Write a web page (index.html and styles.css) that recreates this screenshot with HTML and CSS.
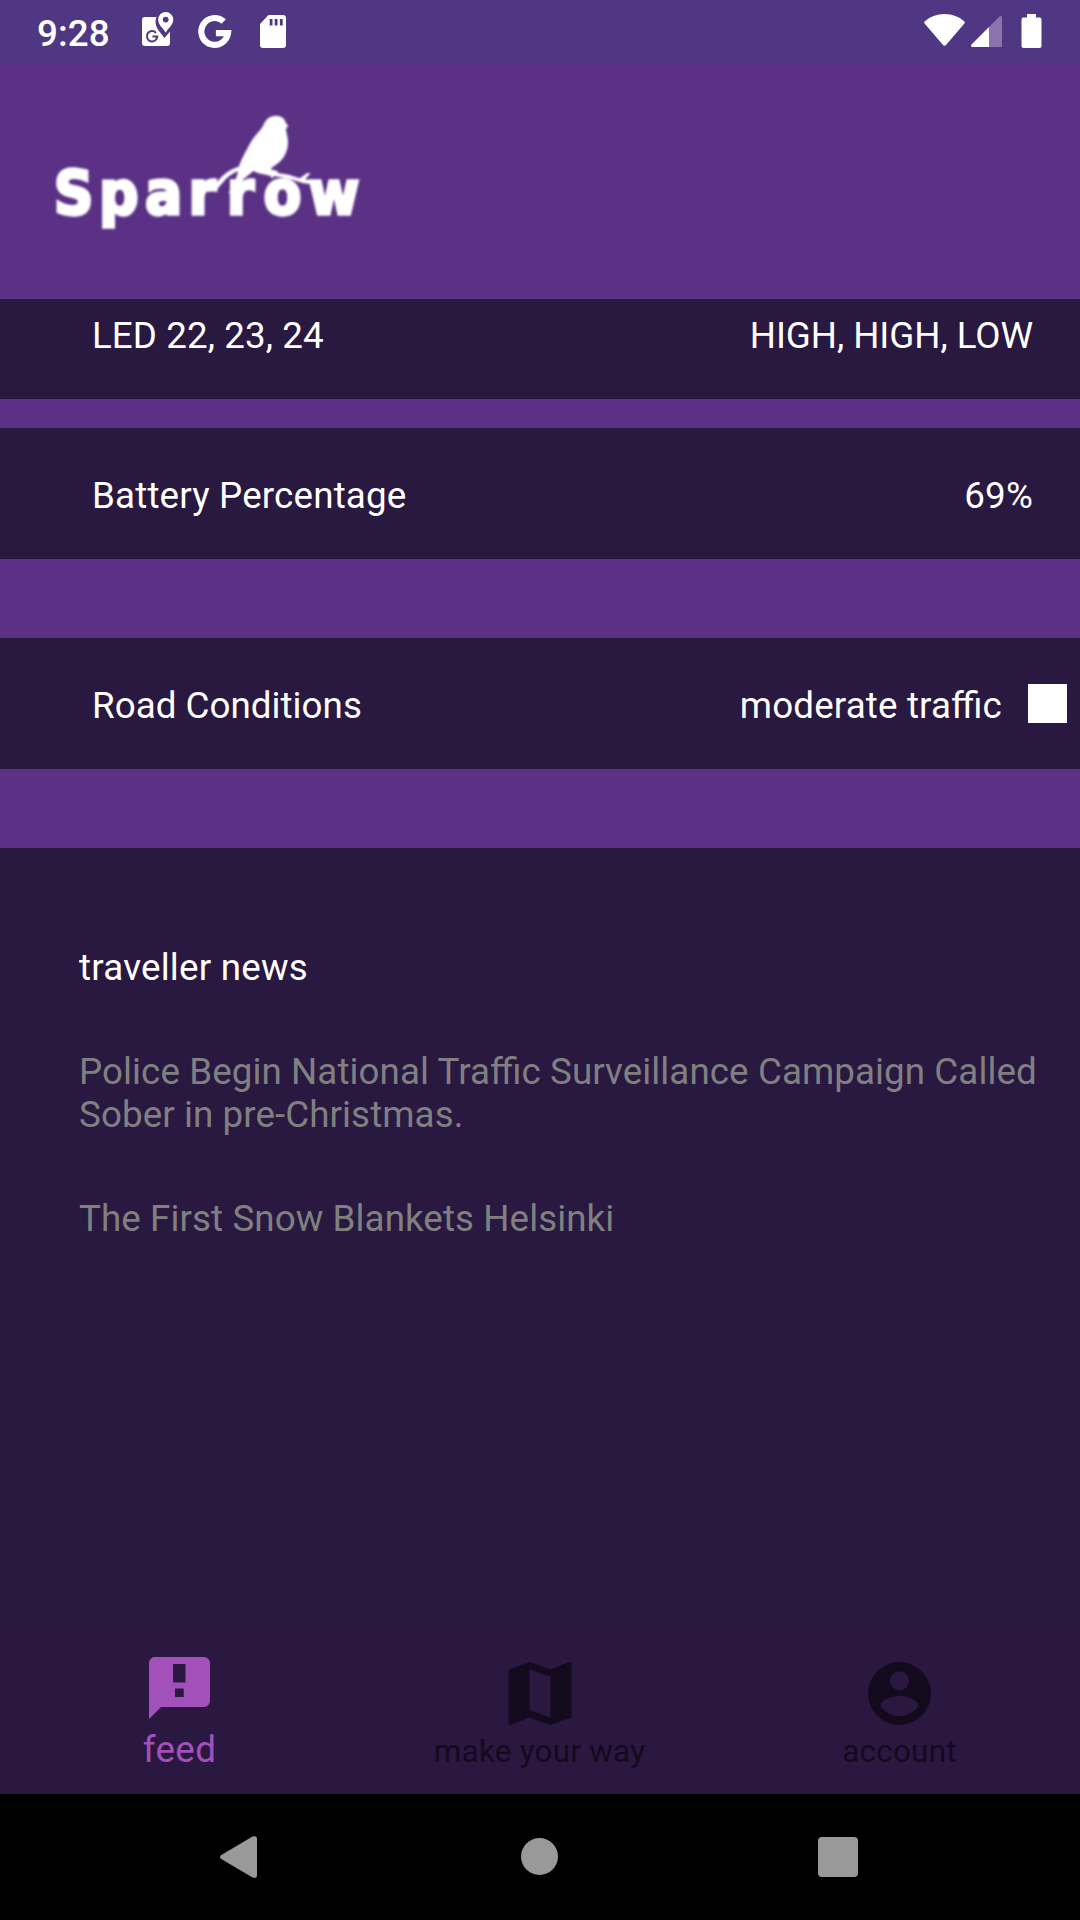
FILE: index.html
```html
<!DOCTYPE html>
<html lang="en">
<head>
<meta charset="utf-8">
<title>Sparrow</title>
<link rel="stylesheet" href="styles.css">
</head>
<body>
<div class="screen">
  <header class="status-bar">
    <span class="clock">9:28</span>
    <svg class="status-left" width="150" height="63" viewBox="0 0 150 63" fill="#fff">
      <path d="M5 17h11.500c-2 5-.5 10 2.500 14l5.500 7 5.500-6.500V43a3 3 0 0 1-3 3H5a3 3 0 0 1-3-3V20a3 3 0 0 1 3-3z"/>
      <path fill-rule="evenodd" d="M25.700 12a7.600 7.600 0 0 1 7.600 7.600c0 5.500-5 8.500-7.600 13-2.600-4.500-7.600-7.500-7.600-13a7.600 7.600 0 0 1 7.600-7.600zm0 4.700a2.900 2.900 0 1 0 0 5.800 2.900 2.900 0 0 0 0-5.800z"/>
      <path d="M16 32.800A5.200 5.200 0 1 0 17.300 36.500H12.500" fill="none" stroke="#503783" stroke-width="2"/>
      <path d="M83.700 21.500A13.400 13.400 0 1 0 88 33.200H75.900" fill="none" stroke="#fff" stroke-width="6.200"/>
      <path fill-rule="evenodd" d="M128.500 15H143a3 3 0 0 1 3 3v27a3 3 0 0 1-3 3h-20a3 3 0 0 1-3-3V24zm1.200 4v6.500h2.800V19zm5 0v6.500h2.800V19zm5.200 0v6.500h2.800V19z"/>
    </svg>
    <svg class="status-right" width="120" height="63" viewBox="0 0 120 63" fill="#fff">
      <path d="M4.500 21.500Q12.500 14 24.500 14t20 7.500q.8 1-.3 2.300L26 45q-1.500 1.600-3 0L4.800 23.800q-1-1.300-.3-2.300z"/>
      <path fill="#8b74ad" d="M69 27 79.500 16.500q2.500-1.500 2.500 1.500V47H69z"/>
      <path d="M69 27v20H52.500q-2.500-.5-1-2.500z"/>
      <path d="M107 14h9v3.500h3.500a2 2 0 0 1 2 2V46a2 2 0 0 1-2 2h-16a2 2 0 0 1-2-2V19.500a2 2 0 0 1 2-2h3.500z"/>
    </svg>
  </header>

  <div class="brand">
    <svg class="logo" width="340" height="140" viewBox="0 0 1020 420" fill="#fff">
      <text class="wordmark" y="343" x="42 178 316 446 561 671 806">Sparrow</text>
      <path d="M596 200C606 172 622 146 634 124C646 104 662 92 670 76C676 58 690 47 708 47C726 47 736 58 738 70L745 78L738 86C738 98 745 112 744 130C743 156 730 178 714 190C704 198 696 202 692 208L712 213L714 219L746 224L780 235L800 220L812 219L806 226L796 238L836 246V256L790 250L752 238L714 230L700 229L697 238L692 228L670 223L655 220L640 213L622 228L608 240L604 256L588 284L566 278L576 262L585 245L592 222L594 214C576 220 560 234 550 246L536 262L530 274L500 276L516 258L530 248C544 228 566 208 596 200z"/>
    </svg>
  </div>

  <main>
    <section class="row row-led"><span>LED 22, 23, 24</span><span class="levels">HIGH, HIGH, LOW</span></section>
    <section class="row row-battery"><span>Battery Percentage</span><span>69%</span></section>
    <section class="row row-road"><span>Road Conditions</span><span class="traffic">moderate traffic</span><i class="swatch"></i></section>
    <section class="news">
      <h2>traveller news</h2>
      <p>Police Begin National Traffic Surveillance Campaign Called Sober in pre-Christmas.</p>
      <p>The First Snow Blankets Helsinki</p>
    </section>
  </main>

  <nav class="tabs">
    <a class="tab active">
      <svg width="64" height="72" viewBox="0 0 64 72" fill="currentColor"><path fill-rule="evenodd" d="M6.500 3H56a6 6 0 0 1 6 6v38a6 6 0 0 1-6 6H13L1 65V9a6 6 0 0 1 5.500-6zM25 10v18.500h12.500V10zm2 24.500v8.500h8.700v-8.500z"/></svg>
      <span>feed</span>
    </a>
    <a class="tab">
      <svg width="64" height="72" viewBox="0 0 64 72" fill="currentColor"><path fill-rule="evenodd" d="M2 15.200 21.500 8l21 7.500L61.500 8q2-.3 2 1.500v54L42.500 71l-21-7.600L2.500 71Q.5 71.400.5 69.500V17q0-1.200 1.500-1.800zM21.500 15.300V56l21 7.500V22.500z"/></svg>
      <span>make your way</span>
    </a>
    <a class="tab">
      <svg width="64" height="72" viewBox="0 0 64 72" fill="currentColor"><path fill-rule="evenodd" d="M31.500 8a31.500 31.500 0 1 1 0 63 31.500 31.500 0 0 1 0-63zm0 9.200a9.600 9.600 0 1 0 0 19.200 9.600 9.600 0 0 0 0-19.200zm0 44.800c7.900 0 14.800-4 18.900-10.100-.1-6.300-12.600-9.800-18.900-9.800s-18.800 3.500-18.900 9.800C16.700 58 23.600 62 31.500 62z"/></svg>
      <span>account</span>
    </a>
  </nav>

  <footer class="system-nav">
    <svg width="1080" height="126" viewBox="0 0 1080 126" fill="#999">
      <path d="M221.300 61 252.500 42.600Q257 41 257 45V81q0 4-4.500 2.400L221.300 65q-2.600-2 0-4z"/>
      <circle cx="539.500" cy="62.500" r="18.500"/>
      <rect x="818" y="43" width="40" height="40" rx="4"/>
    </svg>
  </footer>
</div>
</body>
</html>
```
FILE: styles.css
```css
* {
  box-sizing: border-box;
}

body {
  margin: 0;
  background: #5b3186;
  color: #fff;
  font-family: Roboto, "Liberation Sans", sans-serif;
  font-size: 36.75px;
  font-feature-settings: "liga" 1;
  letter-spacing: 0.08px;
  line-height: 43px;
}

svg {
  display: block;
}

.screen {
  display: flex;
  flex-direction: column;
  width: 1080px;
  height: 1920px;
  overflow: hidden;
}

.status-bar {
  display: flex;
  flex: none;
  height: 63px;
  background: #503783;
}

.clock {
  width: 140px;
  padding: 12px 0 0 37px;
  font-weight: 500;
}

.status-right {
  margin-left: auto;
  margin-right: 40px;
  overflow: visible;
}

.brand {
  flex: none;
  height: 236px;
  padding: 37px 40px 0;
}

.logo {
  filter: blur(0.8px);
}

.wordmark {
  font-family: "DejaVu Sans Condensed", "DejaVu Sans", sans-serif;
  font-size: 182px;
  font-stretch: condensed;
  font-weight: 700;
  stroke: #fff;
  stroke-width: 10px;
}

main {
  display: flex;
  flex: 1;
  flex-direction: column;
}

.row {
  display: flex;
  flex: none;
  justify-content: space-between;
  height: 131px;
  padding: 46px 47px 0 92px;
  background: #291840;
}

.row-led {
  height: 100px;
  margin-bottom: 29px;
  padding-top: 15px;
}

.levels {
  letter-spacing: -0.06px;
}

.row-battery,
.row-road {
  margin-bottom: 79px;
}

.row-battery {
  letter-spacing: 0.17px;
}

.row-road {
  padding-right: 13px;
  letter-spacing: 0.03px;
}

.traffic {
  margin-left: auto;
  letter-spacing: 0.15px;
}

.swatch {
  width: 39px;
  height: 39px;
  margin-left: 26px;
  background: #fff;
}

.news {
  flex: 1;
  padding: 98px 20px 0 79px;
  background: #291840;
}

.news h2 {
  margin: 0;
  font: inherit;
  letter-spacing: 0.22px;
}

.news p {
  margin: 61px 0 0;
  color: #808080;
}

.tabs {
  display: grid;
  flex: none;
  grid-template-columns: repeat(3, 1fr);
  height: 160px;
  padding-top: 20px;
  background: #2a1840;
}

.tab {
  display: flex;
  flex-direction: column;
  gap: 4px;
  align-items: center;
  color: #130b1d;
  font-size: 31.5px;
  letter-spacing: 0.2px;
}

.tab svg {
  margin-right: 1px;
}

.tab span {
  margin-right: 1px;
}

.tab.active {
  gap: 2px;
  color: #a151b9;
  font-size: 36.75px;
  letter-spacing: 0.35px;
}

.system-nav {
  flex: none;
  height: 126px;
  background: #000;
}
```
